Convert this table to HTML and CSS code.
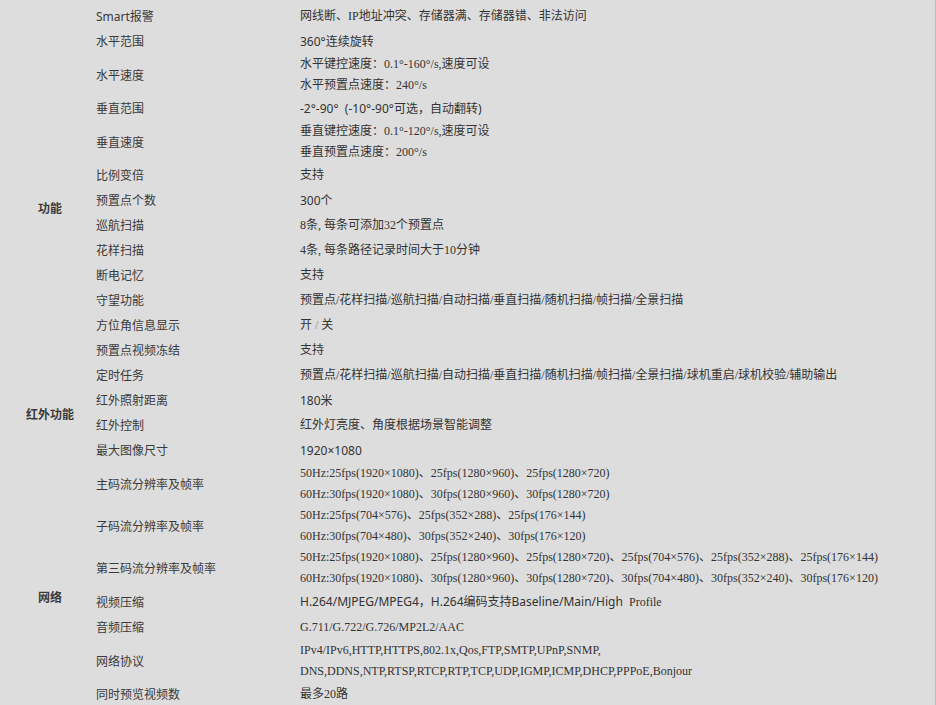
FILE: index.html
```html
<!DOCTYPE html>
<html lang="zh-CN">
<head>
    <meta charset="UTF-8">
    <title>产品参数</title>
    <link rel="stylesheet" href="styles.css">
</head>
<body>

    <div class="spec-wrap">
        <table class="spec-table">
            <tr>
                <td class="group group-func" rowspan="14">功能</td>
                <td class="name">Smart报警</td>
                <td class="value">网线断、IP地址冲突、存储器满、存储器错、非法访问</td>
            </tr>
            <tr>
                <td class="name">水平范围</td>
                <td class="value sans">360°连续旋转</td>
            </tr>
            <tr class="double">
                <td class="name">水平速度</td>
                <td class="value">
                    <p>水平键控速度：0.1°-160°/s,速度可设</p>
                    <p>水平预置点速度：240°/s</p>
                </td>
            </tr>
            <tr>
                <td class="name">垂直范围</td>
                <td class="value sans">-2°-90°&nbsp; (-10°-90°可选，自动翻转)</td>
            </tr>
            <tr class="double">
                <td class="name">垂直速度</td>
                <td class="value">
                    <p>垂直键控速度：0.1°-120°/s,速度可设</p>
                    <p>垂直预置点速度：200°/s</p>
                </td>
            </tr>
            <tr>
                <td class="name">比例变倍</td>
                <td class="value">支持</td>
            </tr>
            <tr>
                <td class="name">预置点个数</td>
                <td class="value sans">300个</td>
            </tr>
            <tr>
                <td class="name">巡航扫描</td>
                <td class="value">8条, 每条可添加32个预置点</td>
            </tr>
            <tr>
                <td class="name">花样扫描</td>
                <td class="value">4条, 每条路径记录时间大于10分钟</td>
            </tr>
            <tr>
                <td class="name">断电记忆</td>
                <td class="value">支持</td>
            </tr>
            <tr>
                <td class="name">守望功能</td>
                <td class="value">预置点/花样扫描/巡航扫描/自动扫描/垂直扫描/随机扫描/帧扫描/全景扫描</td>
            </tr>
            <tr>
                <td class="name">方位角信息显示</td>
                <td class="value">开 <span class="slash">/</span> 关</td>
            </tr>
            <tr>
                <td class="name">预置点视频冻结</td>
                <td class="value">支持</td>
            </tr>
            <tr>
                <td class="name">定时任务</td>
                <td class="value">预置点/花样扫描/巡航扫描/自动扫描/垂直扫描/随机扫描/帧扫描/全景扫描/球机重启/球机校验/辅助输出</td>
            </tr>

            <tr>
                <td class="group" rowspan="2">红外功能</td>
                <td class="name">红外照射距离</td>
                <td class="value sans">180米</td>
            </tr>
            <tr>
                <td class="name">红外控制</td>
                <td class="value">红外灯亮度、角度根据场景智能调整</td>
            </tr>

            <tr>
                <td class="group group-net" rowspan="8">网络</td>
                <td class="name">最大图像尺寸</td>
                <td class="value sans">1920×1080</td>
            </tr>
            <tr class="double">
                <td class="name">主码流分辨率及帧率</td>
                <td class="value">
                    <p>50Hz:25fps(1920×1080)、25fps(1280×960)、25fps(1280×720)</p>
                    <p>60Hz:30fps(1920×1080)、30fps(1280×960)、30fps(1280×720)</p>
                </td>
            </tr>
            <tr class="double">
                <td class="name">子码流分辨率及帧率</td>
                <td class="value">
                    <p>50Hz:25fps(704×576)、25fps(352×288)、25fps(176×144)</p>
                    <p>60Hz:30fps(704×480)、30fps(352×240)、30fps(176×120)</p>
                </td>
            </tr>
            <tr class="double">
                <td class="name">第三码流分辨率及帧率</td>
                <td class="value">
                    <p>50Hz:25fps(1920×1080)、25fps(1280×960)、25fps(1280×720)、25fps(704×576)、25fps(352×288)、25fps(176×144)</p>
                    <p>60Hz:30fps(1920×1080)、30fps(1280×960)、30fps(1280×720)、30fps(704×480)、30fps(352×240)、30fps(176×120)</p>
                </td>
            </tr>
            <tr>
                <td class="name">视频压缩</td>
                <td class="value"><span class="sans">H.264/MJPEG/MPEG4，H.264编码支持Baseline/Main/High&nbsp;</span> Profile</td>
            </tr>
            <tr>
                <td class="name">音频压缩</td>
                <td class="value">G.711/G.722/G.726/MP2L2/AAC</td>
            </tr>
            <tr class="double">
                <td class="name">网络协议</td>
                <td class="value">
                    <p>IPv4/IPv6,HTTP,HTTPS,802.1x,Qos,FTP,SMTP,UPnP,SNMP,</p>
                    <p>DNS,DDNS,NTP,RTSP,RTCP,RTP,TCP,UDP,IGMP,ICMP,DHCP,PPPoE,Bonjour</p>
                </td>
            </tr>
            <tr>
                <td class="name">同时预览视频数</td>
                <td class="value">最多20路</td>
            </tr>
        </table>
    </div>

</body>
</html>
```

FILE: styles.css
```css
* {
    margin: 0;
    padding: 0;
    box-sizing: border-box;
}

body {
    background-color: #dddddd;
    color: #333;
    font-family: "Liberation Serif", "Noto Sans CJK SC", serif;
    font-size: 12px;
}

.spec-wrap {
    min-height: 100vh;
    border-right: 1px solid #bdbdbd;
    padding-top: 4px;
}

.spec-table {
    border-collapse: collapse;
    width: 100%;
}

.spec-table td {
    padding-top: 2px;
    padding-bottom: 2px;
    line-height: 21px;
    vertical-align: middle;
    white-space: nowrap;
}

.spec-table tr.double td {
    padding-top: 0;
    padding-bottom: 0;
}

/* group label column */
.spec-table td.group {
    width: 92px;
    padding: 0 0 0 8px;
    text-align: center;
    font-family: "Noto Sans CJK SC", sans-serif;
    font-weight: bold;
    color: #3a3a3a;
}

.spec-table td.group-func {
    padding-top: 22px;
}

.spec-table td.group-net {
    padding-top: 48px;
}

.spec-table td.name {
    width: 200px;
    padding-left: 4px;
    font-family: "Noto Sans", "Noto Sans CJK SC", sans-serif;
    color: #3a3a3a;
}

.spec-table td.value {
    padding-left: 8px;
}

.sans {
    font-family: "Noto Sans", "Noto Sans CJK SC", sans-serif;
}

.slash {
    color: #888;
}
```
